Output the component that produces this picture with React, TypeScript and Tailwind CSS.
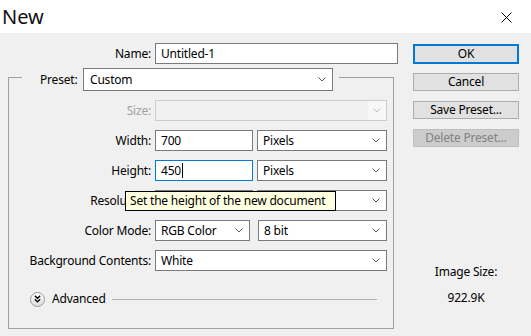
import React from "react";

const Chevron = ({ color = "#5a5a5a" }: { color?: string }) => (
  <svg width="8" height="5" viewBox="0 0 8 5" className="shrink-0">
    <path d="M0.5 0.5 L4 4 L7.5 0.5" fill="none" stroke={color} strokeWidth="1" />
  </svg>
);

const Input = ({ w, value, focused, cursor }: { w: string; value: string; focused?: boolean; cursor?: boolean }) => (
  <div
    className={`${w} h-[21px] bg-white border ${focused ? "border-[#0078d7]" : "border-[#7a7a7a]"} flex items-center pl-[5px] text-black`}
  >
    <span>{value}</span>
    {cursor && <span className="w-[1px] h-[15px] bg-black ml-[1px]" />}
  </div>
);

const Select = ({ w, value, ml }: { w: string; value: string; ml?: string }) => (
  <div
    className={`${w} ${ml ?? ""} h-[21px] bg-white border border-[#7a7a7a] flex items-center justify-between pl-[5px] pr-[6px] text-black`}
  >
    <span>{value}</span>
    <Chevron />
  </div>
);

const Label = ({ children, disabled }: { children: React.ReactNode; disabled?: boolean }) => (
  <div className={`w-[142px] text-right mr-[4px] whitespace-nowrap ${disabled ? "text-[#a0a0a0]" : "text-black"}`}>
    {children}
  </div>
);

const Button = ({ children, primary, disabled, className = "" }: { children: React.ReactNode; primary?: boolean; disabled?: boolean; className?: string }) => (
  <div
    className={`w-[106px] flex items-center justify-center ${className} ${
      primary
        ? "h-[20px] border-2 border-[#0078d7] bg-[#e1e1e1] text-black"
        : disabled
        ? "h-[18px] border border-[#bfbfbf] bg-[#cccccc] text-[#838383]"
        : "h-[18px] border border-[#adadad] bg-[#e1e1e1] text-black"
    }`}
  >
    {children}
  </div>
);

export default function App() {
  return (
    <div className="w-[531px] h-[336px] overflow-hidden bg-[#f0f0f0] font-['Noto_Sans',sans-serif] text-[12px] leading-[16px] tracking-[-0.2px] text-black">
      {/* Title bar */}
      <div className="h-[33px] bg-white flex items-center justify-between">
        <div className="pl-[2px] text-[20px] leading-[28px] tracking-normal text-[#111]">New</div>
        <svg width="11" height="11" viewBox="0 0 11 11" className="mr-[19px] mt-[1px]">
          <path d="M0.5 0.5 L10.5 10.5 M10.5 0.5 L0.5 10.5" stroke="#000" strokeWidth="1" />
        </svg>
      </div>

      {/* Body */}
      <div className="flex">
        {/* Left column */}
        <div className="w-[413px] pt-[10px]">
          <div className="flex items-center">
            <div className="w-[151px] text-right mr-[4px]">Name:</div>
            <Input w="w-[243px]" value="Untitled-1" />
          </div>

          {/* Group box */}
          <div className="ml-[8px] mt-[13px] w-[386px] border border-[#a0a0a0] pb-[21px]">
            <div className="-mt-[10px] ml-[13px] w-[317px] bg-[#f0f0f0] flex items-center pr-[6px]">
              <div className="w-[61px] pl-[18px]">Preset:</div>
              <div className="w-[250px] h-[23px] bg-white border border-[#7a7a7a] flex items-center justify-between pl-[6px] pr-[6px]">
                <span>Custom</span>
                <Chevron />
              </div>
            </div>

            <div className="mt-[9px] flex flex-col gap-[9px]">
              <div className="flex items-center">
                <Label disabled>Size:</Label>
                <div className="w-[232px] h-[21px] bg-[#f0f0f0] border border-[#cccccc] flex items-center justify-end">
                  <div className="h-full w-[18px] bg-[#f7f7f7] flex items-center justify-center">
                    <Chevron color="#bfbfbf" />
                  </div>
                </div>
              </div>

              <div className="flex items-center">
                <Label>Width:</Label>
                <Input w="w-[98px]" value="700" />
                <Select w="w-[130px]" ml="ml-[4px]" value="Pixels" />
              </div>

              <div className="flex items-center">
                <Label>Height:</Label>
                <Input w="w-[98px]" value="450" focused cursor />
                <Select w="w-[130px]" ml="ml-[4px]" value="Pixels" />
              </div>

              <div className="flex items-center relative">
                <div className="w-[116px] overflow-hidden">
                  <Label>Resolution:</Label>
                </div>
                <div className="w-[30px]" />
                <Input w="w-[98px]" value="" />
                <Select w="w-[130px]" ml="ml-[4px]" value="" />
                <div className="absolute left-[116px] top-[1px] w-[211px] h-[20px] bg-[#ffffe1] border border-black flex items-center pl-[4px] whitespace-nowrap">
                  Set the height of the new document
                </div>
              </div>

              <div className="flex items-center">
                <Label>Color Mode:</Label>
                <Select w="w-[95px]" value="RGB Color" />
                <Select w="w-[129px]" ml="ml-[8px]" value="8 bit" />
              </div>

              <div className="flex items-center">
                <Label>Background Contents:</Label>
                <Select w="w-[232px]" value="White" />
              </div>
            </div>

            <div className="mt-[20px] h-[16px] flex items-center">
              <div className="ml-[21px] w-[15px] h-[15px] rounded-full border border-[#9a9a9a] bg-gradient-to-b from-white to-[#dedede] flex items-center justify-center">
                <svg width="7" height="8" viewBox="0 0 7 8">
                  <path d="M0.8 0.8 L3.5 3.3 L6.2 0.8 M0.8 4.3 L3.5 6.8 L6.2 4.3" fill="none" stroke="#000" strokeWidth="1.3" />
                </svg>
              </div>
              <span className="ml-[7px]">Advanced</span>
              <div className="flex-1 ml-[6px] mr-[16px] h-[1px] bg-[#b0b0b0]" />
            </div>
          </div>
        </div>

        {/* Right column */}
        <div className="w-[106px] pt-[11px] flex flex-col">
          <Button primary>OK</Button>
          <Button className="mt-[9px]">Cancel</Button>
          <Button className="mt-[10px]">Save Preset...</Button>
          <Button disabled className="mt-[10px]">Delete Preset...</Button>
          <div className="mt-[117px] text-center">Image Size:</div>
          <div className="mt-[10px] text-center">922.9K</div>
        </div>
      </div>
    </div>
  );
}
